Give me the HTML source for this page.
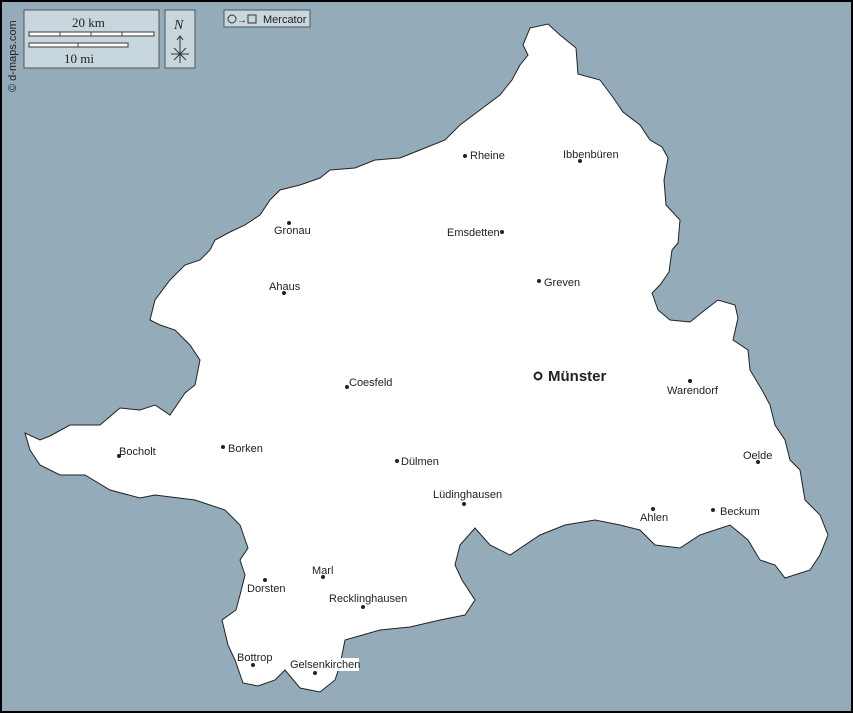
<!DOCTYPE html>
<html><head><meta charset="utf-8"><style>
body{margin:0;width:853px;height:713px;overflow:hidden;background:#94abba;font-family:"Liberation Sans",sans-serif}
svg{display:block}
text{font-family:"Liberation Sans",sans-serif;font-size:11px;fill:#222}
</style></head><body>
<svg width="853" height="713" viewBox="0 0 853 713">
<rect x="1" y="1" width="851" height="711" fill="#94abba" stroke="#000" stroke-width="2"/>
<polygon fill="#fff" stroke="#222" stroke-width="1" points="523,45 530,28 548,24 560,35 576,48 578,74 600,80 612,96 623,112 640,125 650,140 662,147 668,158 664,180 666,205 680,220 678,243 672,250 669,272 660,285 652,293 658,310 670,320 690,322 705,310 718,300 735,305 738,318 733,340 748,350 750,370 762,390 770,405 775,425 785,440 790,460 800,470 805,500 820,515 828,535 820,555 810,570 785,578 775,565 760,560 748,540 730,525 700,535 680,548 655,545 640,530 620,525 595,520 565,525 540,535 510,555 490,545 475,528 460,545 455,565 462,580 475,600 465,615 440,620 410,627 380,630 345,640 340,665 335,680 320,692 300,688 285,670 275,680 258,686 243,683 235,660 228,645 222,620 236,610 240,595 245,575 240,560 248,548 240,525 225,510 195,500 155,495 140,498 110,490 85,475 60,475 40,465 30,450 25,433 40,440 50,436 70,425 100,425 120,408 140,410 155,405 170,415 185,393 195,385 200,360 190,345 175,330 160,325 150,320 155,300 170,280 185,265 200,260 210,250 215,240 230,232 245,225 260,215 270,200 280,190 300,185 320,178 330,170 355,168 375,160 400,158 420,150 445,140 460,125 480,110 500,95 512,80 520,65 528,55"/>
<!-- scale box -->
<rect x="24" y="10" width="135" height="58" fill="#c8d6de" stroke="#555"/>
<text x="72" y="27" style="font-family:'Liberation Serif',serif;font-size:13px">20 km</text>
<rect x="29" y="32" width="125" height="4" fill="#fff" stroke="#555" stroke-width="1.2"/>
<line x1="60" y1="32" x2="60" y2="36" stroke="#444"/><line x1="91" y1="32" x2="91" y2="36" stroke="#444"/><line x1="122" y1="32" x2="122" y2="36" stroke="#444"/>
<rect x="29" y="43" width="99" height="4" fill="#fff" stroke="#555" stroke-width="1.2"/>
<line x1="78" y1="43" x2="78" y2="47" stroke="#444"/>
<text x="64" y="63" style="font-family:'Liberation Serif',serif;font-size:13px">10 mi</text>
<rect x="165" y="10" width="30" height="58" fill="#c8d6de" stroke="#555"/>
<text x="174" y="29" style="font-family:'Liberation Serif',serif;font-size:14px;font-style:italic">N</text>
<line x1="180" y1="36" x2="180" y2="63" stroke="#333"/><line x1="171" y1="54" x2="189" y2="54" stroke="#333"/>
<line x1="174" y1="48" x2="186" y2="60" stroke="#333"/><line x1="186" y1="48" x2="174" y2="60" stroke="#333"/>
<polyline points="177,40 180,36 183,40" fill="none" stroke="#333"/>
<text transform="translate(16,92) rotate(-90)" style="font-size:11px">© d-maps.com</text>
<rect x="224" y="10" width="86" height="17" fill="#c8d6de" stroke="#555"/>
<circle cx="232" cy="19" r="4" fill="none" stroke="#333"/>
<text x="237" y="23" style="font-size:10px">→</text>
<rect x="248" y="15" width="8" height="8" fill="none" stroke="#333"/>
<text x="263" y="23" style="font-size:11px">Mercator</text>
<!-- cities -->
<g fill="#222">
<circle cx="465" cy="156" r="2"/><circle cx="580" cy="161" r="2"/><circle cx="289" cy="223" r="2"/><circle cx="502" cy="232" r="2"/>
<circle cx="539" cy="281" r="2"/><circle cx="284" cy="293" r="2"/><circle cx="690" cy="381" r="2"/><circle cx="347" cy="387" r="2"/>
<circle cx="119" cy="456" r="2"/><circle cx="223" cy="447" r="2"/><circle cx="397" cy="461" r="2"/><circle cx="758" cy="462" r="2"/>
<circle cx="464" cy="504" r="2"/><circle cx="653" cy="509" r="2"/><circle cx="713" cy="510" r="2"/><circle cx="265" cy="580" r="2"/>
<circle cx="323" cy="577" r="2"/><circle cx="363" cy="607" r="2"/><circle cx="253" cy="665" r="2"/><circle cx="315" cy="673" r="2"/>
</g>
<circle cx="538" cy="376" r="3.5" fill="#fff" stroke="#222" stroke-width="2"/>
<text x="548" y="381" style="font-size:15px;font-weight:bold">Münster</text>
<text x="470" y="159">Rheine</text>
<text x="563" y="158">Ibbenbüren</text>
<text x="274" y="234">Gronau</text>
<text x="447" y="236">Emsdetten</text>
<text x="544" y="286">Greven</text>
<text x="269" y="290">Ahaus</text>
<text x="667" y="394">Warendorf</text>
<text x="349" y="386">Coesfeld</text>
<text x="119" y="455">Bocholt</text>
<text x="228" y="452">Borken</text>
<text x="401" y="465">Dülmen</text>
<text x="743" y="459">Oelde</text>
<text x="433" y="498">Lüdinghausen</text>
<text x="640" y="521">Ahlen</text>
<text x="720" y="515">Beckum</text>
<text x="247" y="592">Dorsten</text>
<text x="312" y="574">Marl</text>
<text x="329" y="602">Recklinghausen</text>
<text x="237" y="661">Bottrop</text>
<rect x="288" y="658" width="71" height="13" fill="#fff"/>
<text x="290" y="668">Gelsenkirchen</text>
</svg>
</body></html>
